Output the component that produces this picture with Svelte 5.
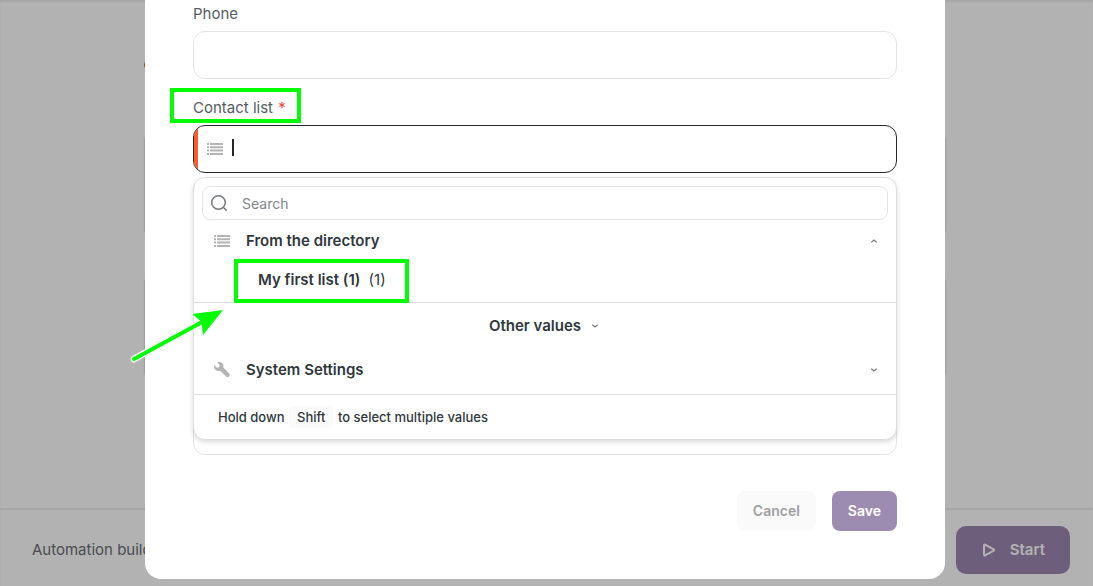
<script>
  let phone = $state('');
  let listQuery = $state('');
  let search = $state('');
  let notes = $state('');
  let directoryOpen = $state(true);
  let otherOpen = $state(false);
  let systemOpen = $state(false);

  let lists = [{ name: 'My first list (1)', count: 1 }];
</script>

{#snippet listIcon()}
  <svg class="icon" width="16" height="14" viewBox="0 0 16 14" aria-hidden="true">
    <path
      d="M0 1h2v2H0zM3 1h13v2H3zM0 4.300h2v2H0zM3 4.300h13v2H3zM0 7.600h2v2H0zM3 7.600h13v2H3zM0 11h2v2H0zM3 11h13v2H3z"
      fill="#b4b4b4"
    />
  </svg>
{/snippet}

{#snippet chevron(open)}
  <svg class="chevron" width="6" height="4" viewBox="0 0 6 4" aria-hidden="true">
    <path
      d={open ? 'M.3 3.400 3 1l2.700 2.400' : 'M.3 .6 3 3 5.700 .6'}
      fill="none"
      stroke="#777"
      stroke-width="1.200"
    />
  </svg>
{/snippet}

<div class="page">
  <main>
    <span class="dot"></span>
    <div class="card"></div>
    <div class="card"></div>
  </main>
  <footer>
    <a href="#builder">Automation builder</a>
    <button class="start">
      <svg width="14" height="14" viewBox="0 0 14 14" aria-hidden="true">
        <path
          d="M2 2.200v9.600a.7.7 0 0 0 1 .6l8.800-4.800a.7.7 0 0 0 0-1.200L3 1.600a.7.7 0 0 0-1 .6z"
          fill="none"
          stroke="#fff"
          stroke-width="2"
        />
      </svg>
      Start
    </button>
  </footer>
</div>

<div class="overlay">
  <form class="modal" onsubmit={(e) => e.preventDefault()}>
    <div class="field">
      <label for="phone">Phone</label>
      <input id="phone" class="box" type="tel" bind:value={phone} />
    </div>

    <div class="field">
      <label for="list">Contact list <span class="required">*</span></label>
      <div class="box picker">
        {@render listIcon()}
        <span class="caret"></span>
        <input id="list" type="text" bind:value={listQuery} />
      </div>

      <div class="dropdown">
        <div class="search">
          <svg width="18" height="18" viewBox="0 0 18 18" aria-hidden="true">
            <g fill="none" stroke="#737b80" stroke-width="1.500">
              <circle cx="8.500" cy="8.500" r="6.800" />
              <path d="m13.300 13.300 3.400 3.400" />
            </g>
          </svg>
          <input type="text" placeholder="Search" aria-label="Search" bind:value={search} />
        </div>

        <button type="button" class="group" onclick={() => (directoryOpen = !directoryOpen)}>
          {@render listIcon()}
          <span>From the directory</span>
          {@render chevron(directoryOpen)}
        </button>
        {#if directoryOpen}
          {#each lists as list}
            <button type="button" class="option">
              <b>{list.name}</b> <span>({list.count})</span>
            </button>
          {/each}
        {/if}

        <button type="button" class="other" onclick={() => (otherOpen = !otherOpen)}>
          Other values
          {@render chevron(otherOpen)}
        </button>

        <button type="button" class="group" onclick={() => (systemOpen = !systemOpen)}>
          <svg class="icon" width="16" height="16" viewBox="0 0 16 16" aria-hidden="true">
            <path
              d="M3.400.4C5.200-.3 7.300.1 8.500 1.600c1 1.200 1.200 2.600.8 4l5.900 5.900c1.800 1.900-1.200 4.900-3.100 3.100L6.200 8.700C4.700 9.300 3 9 1.700 8 .3 6.800-.3 5 .2 3.200l2.700 2.500 2.300-.5.600-2.300z"
              fill="#b4b4b4"
            />
          </svg>
          <span>System Settings</span>
          {@render chevron(systemOpen)}
        </button>

        <div class="hint">Hold down <kbd>Shift</kbd> to select multiple values</div>
      </div>
    </div>

    <div class="field">
      <textarea class="box notes" aria-label="Notes" bind:value={notes}></textarea>
    </div>

    <div class="actions">
      <button type="button" class="cancel">Cancel</button>
      <button class="save">Save</button>
    </div>

    <div class="mark mark-label"></div>
    <div class="mark mark-option"></div>
    <svg class="arrow" width="100" height="64" viewBox="0 0 100 64" aria-hidden="true">
      <path d="M6 57 76 19" stroke="#fff" stroke-width="7" stroke-linecap="round" />
      <path d="M6 57 76 19" stroke="#0f0" stroke-width="4" stroke-linecap="round" />
      <path d="M95 8 64.500 12l9 8 1.500 13z" fill="#0f0" />
    </svg>
  </form>
</div>

<style>
  :global(body) {
    color: #2f373d;
    font-family: Inter, sans-serif;
    font-size: 15px;
    line-height: 24px;
  }

  .page {
    display: flex;
    flex-direction: column;
    min-height: 100vh;
    background: #fff;
    box-shadow: inset 0 2px 2px #eee;
  }

  main {
    position: relative;
    flex: 1;
    display: flex;
    flex-direction: column;
    align-items: center;
    gap: 48px;
    padding: 138px 3px 0 0;
  }

  .card {
    width: 100%;
    max-width: 800px;
    height: 94px;
    box-shadow: 0 0 2px #aaa;
  }

  .dot {
    position: absolute;
    top: 60px;
    left: calc(50% - 403px);
    width: 10px;
    height: 10px;
    border-radius: 5px;
    background: #e8602c;
  }

  footer {
    display: flex;
    align-items: center;
    justify-content: space-between;
    padding: 16px 23px 12px 32px;
    border-top: 2px solid #efefef;
  }

  footer a {
    color: #6b6f76;
    text-decoration: none;
  }

  button {
    padding: 0;
    border: none;
    background: none;
    color: inherit;
    font: inherit;
    font-weight: 600;
    cursor: pointer;
  }

  .start {
    display: flex;
    align-items: center;
    gap: 14px;
    height: 48px;
    padding: 0 25px;
    padding-left: 26px;
    border-radius: 10px;
    background: #9c89b1;
    color: #fff;
  }

  .overlay {
    position: absolute;
    inset: 0;
    display: flex;
    justify-content: center;
    align-items: flex-start;
    padding-right: 3px;
    background: rgba(0, 0, 0, 0.3);
  }

  .modal {
    position: relative;
    box-sizing: border-box;
    width: 100%;
    max-width: 800px;
    padding: 2px 48px 48px;
    border-radius: 0 0 16px 16px;
    background: #fff;
  }

  .field {
    position: relative;
    margin-bottom: 17px;
  }

  label {
    display: block;
    margin-bottom: 5px;
    color: #555c63;
  }

  .required {
    margin-left: 1px;
    color: #f4433a;
  }

  input {
    min-width: 0;
    border: none;
    outline: none;
    background: none;
    color: inherit;
    font: inherit;
  }

  .box {
    display: block;
    box-sizing: border-box;
    width: 100%;
    height: 48px;
    padding: 0 12px;
    border: 1px solid #e4e4e6;
    border-radius: 12px;
  }

  .picker {
    display: flex;
    align-items: center;
    overflow: hidden;
    padding-left: 0;
    border-color: #24282c;
  }

  .picker::before {
    content: '';
    width: 4px;
    height: 100%;
    margin-right: 9px;
    background: #ff5a2c;
  }

  .picker input {
    flex: 1;
  }

  .caret {
    width: 2px;
    height: 17px;
    margin: 0 0 4px 9px;
    background: #24282c;
  }

  .dropdown {
    position: absolute;
    z-index: 1;
    top: 100%;
    left: 0;
    right: 0;
    margin-top: 4px;
    border: 1px solid #dcdddf;
    border-radius: 12px;
    background: #fff;
    box-shadow: 0 2px 5px rgba(0, 0, 0, 0.15);
  }

  .search {
    display: flex;
    align-items: center;
    gap: 14px;
    box-sizing: border-box;
    height: 34px;
    margin: 8px 8px 0;
    padding: 0 7px;
    border: 1px solid #e2e4e6;
    border-radius: 8px;
    font-size: 14px;
  }

  .search input {
    flex: 1;
    padding: 2px 0 0;
  }

  .search input::placeholder {
    color: #82878c;
    opacity: 1;
  }

  .group {
    display: flex;
    align-items: center;
    width: 100%;
    height: 42px;
    padding: 0 19px 0 20px;
  }

  .group span {
    flex: 1;
    padding-left: 16px;
    text-align: left;
  }

  .option {
    display: block;
    width: 100%;
    height: 41px;
    padding: 0 64px 4px;
    border-bottom: 1px solid #dcdddf;
    font-weight: 400;
    text-align: left;
  }

  .option b {
    margin-right: 4px;
    font-weight: 600;
  }

  .other {
    display: flex;
    align-items: center;
    justify-content: center;
    gap: 11px;
    width: 100%;
    height: 46px;
    padding-right: 3px;
  }

  .hint {
    margin-top: 3px;
    padding: 10px 24px;
    border-top: 1px solid #dcdddf;
    font-size: 13px;
    font-weight: 500;
  }

  kbd {
    margin: 0 1px;
    padding: 3px 8px;
    border-radius: 4px;
    background: #fafafa;
    font: inherit;
  }

  .notes {
    height: 265px;
    resize: none;
  }

  .actions {
    display: flex;
    justify-content: flex-end;
    gap: 16px;
    padding-top: 19px;
  }

  .actions button {
    height: 40px;
    padding: 0 16px;
    border-radius: 8px;
    font-size: 14px;
  }

  .actions .cancel {
    background: #fafafa;
    color: #a0a0a2;
  }

  .actions .save {
    background: #9c8cb2;
    color: #fff;
  }

  .mark {
    position: absolute;
    z-index: 2;
    box-sizing: border-box;
    border: 4px solid #0f0;
    pointer-events: none;
  }

  .mark-label {
    top: 88px;
    left: 25px;
    width: 131px;
    height: 35px;
  }

  .mark-option {
    top: 259px;
    left: 89px;
    width: 175px;
    height: 44px;
  }

  .arrow {
    position: absolute;
    z-index: 2;
    top: 302px;
    left: -17px;
    pointer-events: none;
  }
</style>
